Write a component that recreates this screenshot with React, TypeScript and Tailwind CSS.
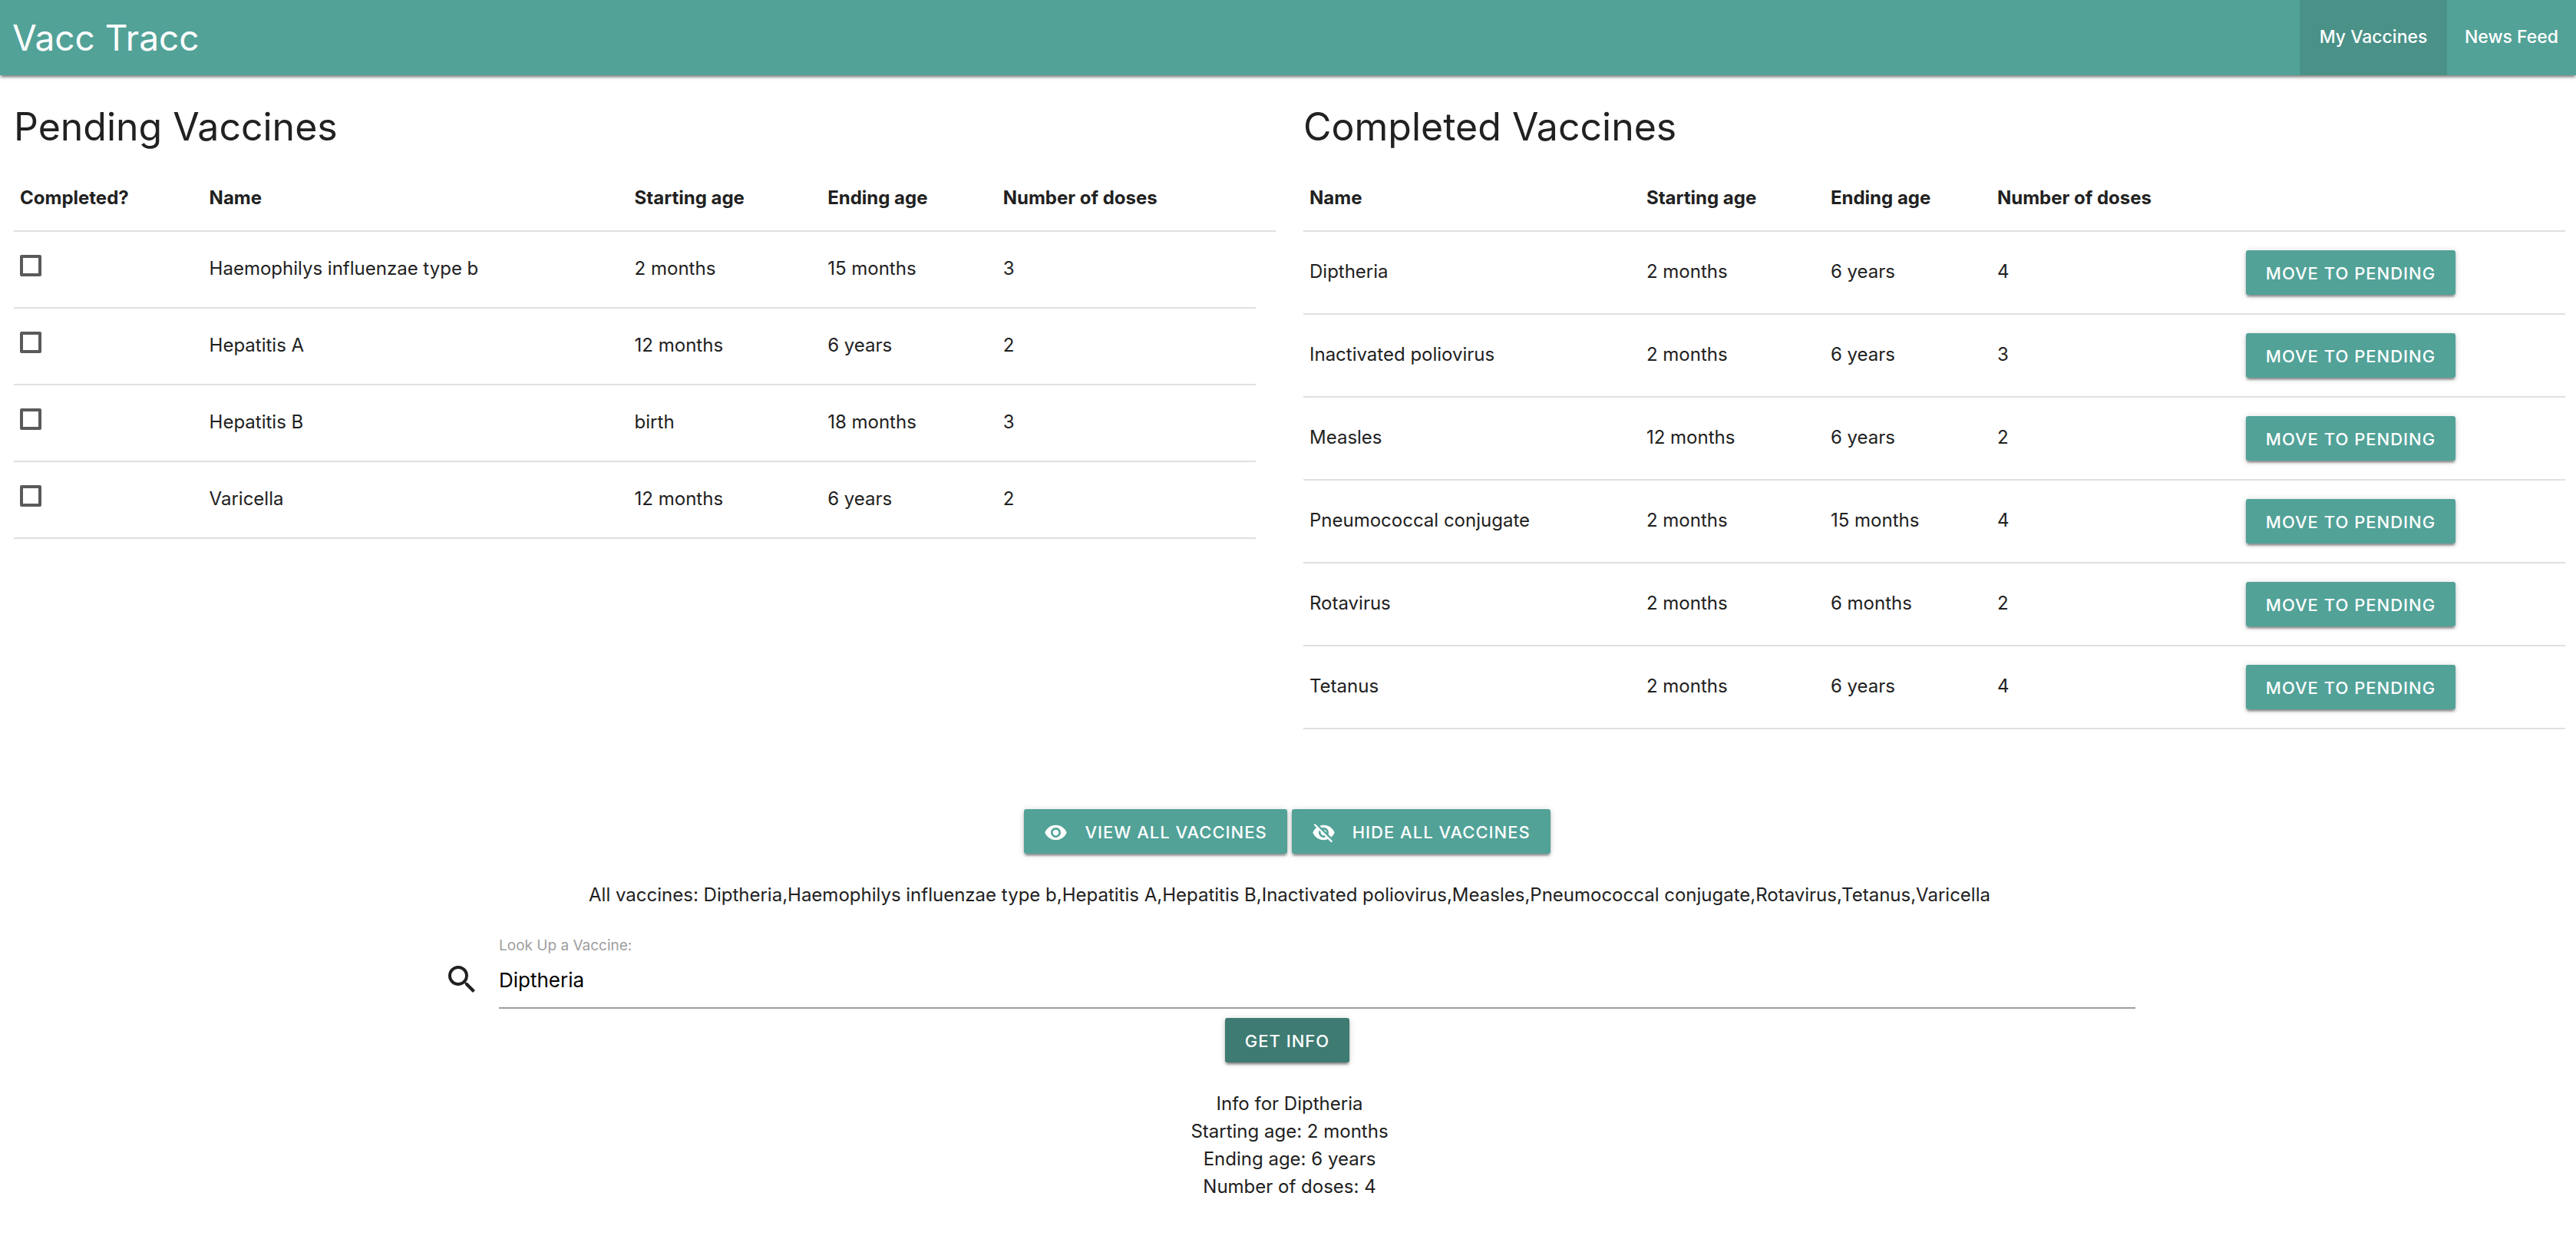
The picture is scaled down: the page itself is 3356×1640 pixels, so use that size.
import { useState } from "react";
import type { ReactNode } from "react";
import { MdRemoveRedEye, MdSearch, MdVisibilityOff } from "react-icons/md";

type Vaccine = { name: string; start: string; end: string; doses: number };

const pending: Vaccine[] = [
  { name: "Haemophilys influenzae type b", start: "2 months", end: "15 months", doses: 3 },
  { name: "Hepatitis A", start: "12 months", end: "6 years", doses: 2 },
  { name: "Hepatitis B", start: "birth", end: "18 months", doses: 3 },
  { name: "Varicella", start: "12 months", end: "6 years", doses: 2 },
];

const completed: Vaccine[] = [
  { name: "Diptheria", start: "2 months", end: "6 years", doses: 4 },
  { name: "Inactivated poliovirus", start: "2 months", end: "6 years", doses: 3 },
  { name: "Measles", start: "12 months", end: "6 years", doses: 2 },
  { name: "Pneumococcal conjugate", start: "2 months", end: "15 months", doses: 4 },
  { name: "Rotavirus", start: "2 months", end: "6 months", doses: 2 },
  { name: "Tetanus", start: "2 months", end: "6 years", doses: 4 },
];

const allNames = [...pending, ...completed].map((v) => v.name).sort().join(",");

function Button({ children, dark = false }: { children: ReactNode; dark?: boolean }) {
  return (
    <button
      type="button"
      className={
        "inline-flex h-[58px] items-center rounded-[3px] px-[26px] pt-0.5 text-[22px] font-medium tracking-[1px] whitespace-nowrap text-white uppercase shadow-[0_3px_3px_rgba(0,0,0,0.24),0_5px_2px_-3px_rgba(0,0,0,0.2),0_1px_8px_rgba(0,0,0,0.16)] " +
        (dark ? "bg-[#3e7b72]" : "bg-[#52a298]")
      }
    >
      {children}
    </button>
  );
}

function Header() {
  return (
    <header className="relative flex h-[98px] items-stretch justify-between bg-[#52a298] text-white shadow-[0_3px_3px_rgba(0,0,0,0.24),0_5px_2px_-3px_rgba(0,0,0,0.2),0_1px_8px_rgba(0,0,0,0.16)]">
      <a href="#home" className="flex items-center pl-4 text-[46px]">
        Vacc Tracc
      </a>
      <nav className="flex text-[23px] font-medium">
        <a href="#vaccines" className="flex w-48 items-center justify-center bg-[#4a9187] pb-0.5">
          My Vaccines
        </a>
        <a href="#news" className="flex w-42 items-center justify-center pb-0.5">
          News Feed
        </a>
      </nav>
    </header>
  );
}

const headCell = "h-[90px] border-b-2 border-[#e0e0e0] px-2 pt-1 text-left font-bold";
const cell = "border-b-2 border-[#e0e0e0] px-2 pb-0.5";

function PendingTable() {
  return (
    <table className="w-full table-fixed border-separate border-spacing-0">
      <colgroup>
        <col className="w-[15%]" />
        <col className="w-[33.7%]" />
        <col className="w-[15.3%]" />
        <col className="w-[13.9%]" />
        <col className="w-[20.5%]" />
        <col />
      </colgroup>
      <thead>
        <tr>
          <th className={headCell}>Completed?</th>
          <th className={headCell}>Name</th>
          <th className={headCell}>Starting age</th>
          <th className={headCell}>Ending age</th>
          <th className={headCell}>Number of doses</th>
          <td className={headCell} />
        </tr>
      </thead>
      <tbody>
        {pending.map((v) => (
          <tr key={v.name} className="h-25">
            <td className="border-b-2 border-[#e0e0e0] px-2 pb-2.5">
              <input
                type="checkbox"
                aria-label={"Mark " + v.name + " completed"}
                className="block size-7 appearance-none rounded-[2px] border-4 border-[#5a5a5a] checked:bg-[#52a298]"
              />
            </td>
            <td className={cell}>{v.name}</td>
            <td className={cell}>{v.start}</td>
            <td className={cell}>{v.end}</td>
            <td className={cell}>{v.doses}</td>
          </tr>
        ))}
      </tbody>
    </table>
  );
}

function CompletedTable() {
  return (
    <table className="w-full table-fixed border-separate border-spacing-0">
      <colgroup>
        <col className="w-[26.7%]" />
        <col className="w-[14.6%]" />
        <col className="w-[13.2%]" />
        <col className="w-[19.7%]" />
        <col />
      </colgroup>
      <thead>
        <tr>
          <th className={headCell}>Name</th>
          <th className={headCell}>Starting age</th>
          <th className={headCell}>Ending age</th>
          <th className={headCell}>Number of doses</th>
          <td className={headCell} />
        </tr>
      </thead>
      <tbody>
        {completed.map((v) => (
          <tr key={v.name} className="h-27">
            <td className={cell}>{v.name}</td>
            <td className={cell}>{v.start}</td>
            <td className={cell}>{v.end}</td>
            <td className={cell}>{v.doses}</td>
            <td className="border-b-2 border-[#e0e0e0] px-2">
              <div className="flex">
                <Button>Move to pending</Button>
              </div>
            </td>
          </tr>
        ))}
      </tbody>
    </table>
  );
}

export default function App() {
  const [query, setQuery] = useState("Diptheria");
  return (
    <div className="min-h-screen bg-white font-[Inter,'Liberation_Sans',sans-serif] text-[24px] leading-9 text-[#212121]">
      <Header />
      <main className="pr-3.5 pl-4.5">
        <div className="grid grid-cols-2 gap-9 pt-8">
          <section>
            <h2 className="pb-3 text-[50px] leading-[70px]">Pending Vaccines</h2>
            <PendingTable />
          </section>
          <section>
            <h2 className="pb-3 text-[50px] leading-[70px]">Completed Vaccines</h2>
            <CompletedTable />
          </section>
        </div>

        <section className="pt-26 text-center">
          <div className="flex justify-center gap-1.5 pr-1.5">
            <Button>
              <MdRemoveRedEye className="mr-[22px] size-[31px]" />
              View all vaccines
            </Button>
            <Button>
              <MdVisibilityOff className="mr-[22px] size-[31px]" />
              Hide all vaccines
            </Button>
          </div>
          <p className="pt-9">All vaccines: {allNames}</p>
        </section>

        <form className="mx-auto w-2/3 pt-8" onSubmit={(e) => e.preventDefault()}>
          <div className="flex items-start gap-6 px-1.5">
            <MdSearch className="mt-9 size-12 shrink-0" />
            <div className="grow">
              <label htmlFor="lookup" className="block text-[19px] leading-8 text-[#9e9e9e]">
                Look Up a Vaccine:
              </label>
              <input
                id="lookup"
                type="text"
                value={query}
                onChange={(e) => setQuery(e.target.value)}
                className="block h-[66px] w-full border-b-2 border-[#9e9e9e] pb-2 text-[26px] text-black outline-none"
              />
            </div>
          </div>
          <div className="flex justify-center pt-3 pr-1.5">
            <Button dark>Get info</Button>
          </div>
        </form>

        <section className="pt-9 pb-16 text-center">
          <p>Info for Diptheria</p>
          <p>Starting age: 2 months</p>
          <p>Ending age: 6 years</p>
          <p>Number of doses: 4</p>
        </section>
      </main>
    </div>
  );
}
